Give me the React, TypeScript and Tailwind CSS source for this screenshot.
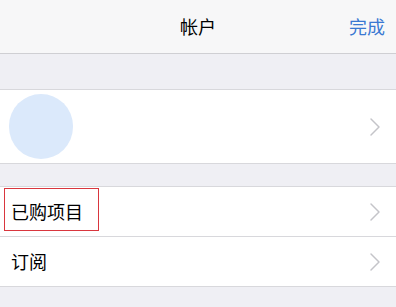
import { ChevronRight } from "lucide-react";

const font = { fontFamily: '"Noto Sans CJK SC", "Liberation Sans", sans-serif' };

function Chevron() {
  return <ChevronRight className="h-8 w-8 text-[#c4c4c9]" strokeWidth={1.1} />;
}

function Row({ label, boxed }: { label: string; boxed?: boolean }) {
  return (
    <div className="flex h-[49px] items-center justify-between bg-white pl-[11px] pr-[5px]">
      <span className={boxed ? "relative text-[18px] text-black" : "text-[18px] text-black"}>
        {label}
        {boxed && (
          <span className="pointer-events-none absolute -left-[7px] -top-[10px] h-[43px] w-[95px] border border-[#d9363e]" />
        )}
      </span>
      <Chevron />
    </div>
  );
}

export default function App() {
  return (
    <div className="h-[307px] w-[396px] overflow-hidden bg-[#efeff4]" style={font}>
      {/* Nav bar */}
      <div className="relative flex h-[54px] items-center justify-center border-b border-[#cfcfd3] bg-[#f7f7f8]">
        <span className="text-[18px] text-black">帐户</span>
        <span className="absolute right-[11px] text-[18px] text-[#3a78d2]">完成</span>
      </div>

      <div className="h-[35px]" />

      {/* Profile */}
      <div className="flex h-[75px] items-center justify-between border-y border-[#d8d8dc] bg-white pl-[9px] pr-[5px]">
        <div className="h-[65px] w-[64px] rounded-full bg-[#dbe9fb]" />
        <Chevron />
      </div>

      <div className="h-[22px]" />

      <div className="border-y border-[#d8d8dc]">
        <Row label="已购项目" boxed />
        <div className="h-px bg-[#d8d8dc]" />
        <Row label="订阅" />
      </div>
    </div>
  );
}
